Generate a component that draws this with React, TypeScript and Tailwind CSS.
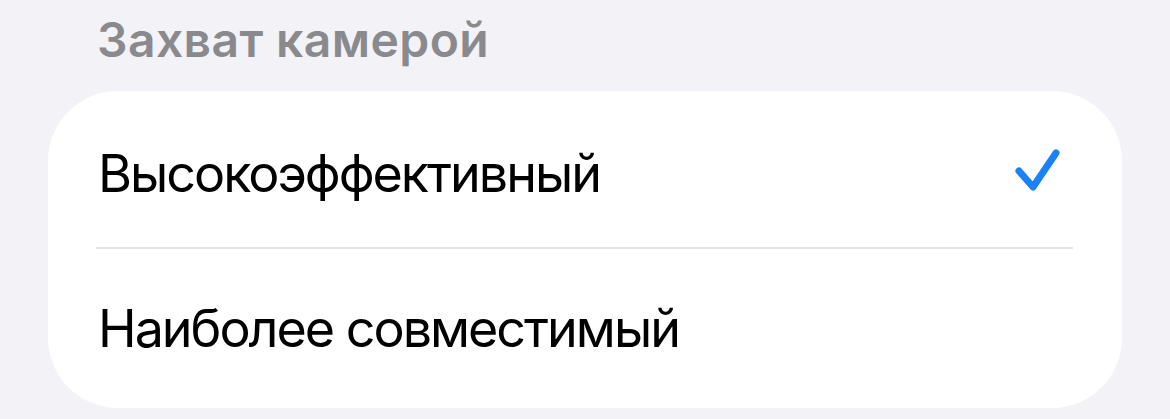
const options = [
  { label: 'Высокоэффективный', selected: true },
  { label: 'Наиболее совместимый', selected: false },
]

function Check() {
  return (
    <svg width="52" height="50" viewBox="0 0 52 50" fill="none">
      <path
        d="M6 22 L20 38 L43 4"
        stroke="#1a82f4"
        strokeWidth="7"
        strokeLinecap="round"
        strokeLinejoin="round"
      />
    </svg>
  )
}

export default function App() {
  return (
    <div className="w-[1170px] h-[419px] bg-[#f2f2f7] overflow-hidden" style={{ fontFamily: 'Inter, "Liberation Sans", sans-serif' }}>
      <div className="pl-[97px] pt-[12px] h-[91px] text-[48px] font-semibold text-[#8a8a8e] leading-[56px] tracking-[0.4px]">
        Захват камерой
      </div>
      <div className="mx-[48px] h-[317px] bg-white rounded-[70px] flex flex-col">
        {options.map((opt, i) => (
          <div key={opt.label} className="flex flex-col">
            {i > 0 && <div className="ml-[48px] mr-[49px] h-[2px] bg-[#e4e4e8]" />}
            <div className={`flex items-center justify-between pl-[50px] pr-[57px] ${i === 0 ? 'h-[156px] pt-[10px]' : 'h-[159px]'}`}>
              <span className="text-[52px] text-black leading-none tracking-[-2px]">{opt.label}</span>
              {opt.selected && <Check />}
            </div>
          </div>
        ))}
      </div>
    </div>
  )
}
